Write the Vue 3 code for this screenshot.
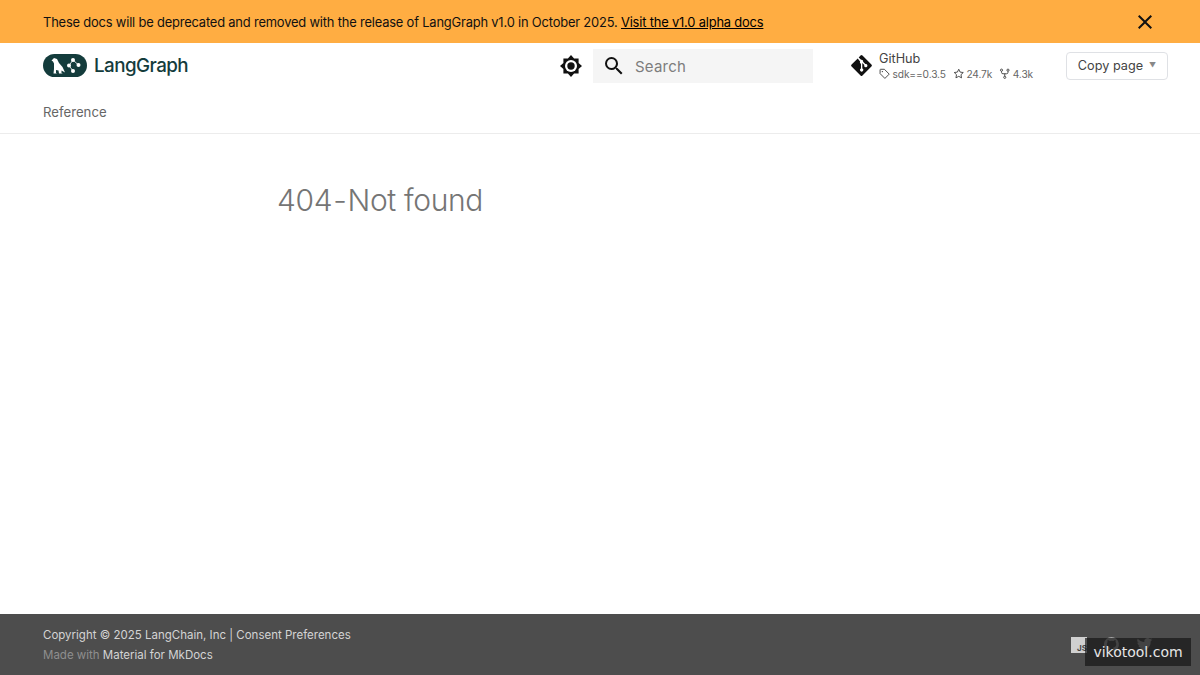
<template>
  <div class="page">
    <aside class="banner">
      <p class="banner-text">These docs will be deprecated and removed with the release of LangGraph v1.0 in October 2025. <a class="banner-link">Visit the v1.0 alpha docs</a></p>
      <svg class="close" viewBox="0 0 24 24"><path d="M19 6.41 17.59 5 12 10.59 6.41 5 5 6.41 10.59 12 5 17.59 6.41 19 12 13.41 17.59 19 19 17.59 13.41 12z"/></svg>
    </aside>
    <header class="header">
      <div class="brand">
        <svg class="logo" viewBox="0 0 44 23">
          <rect width="44" height="23" rx="11.500" fill="#143c3c"/>
          <path d="M8.500 6.500 11 4 14 5 16 9 19.500 13 22 18.500 18.500 16.500 18.500 19 20 19.500 16 19.500 15.500 16.500 13 16 13 19 14 19.500 10.500 19.500 11 15 11 9.500 10 7.500Z" fill="#fff"/>
          <g fill="#fff"><circle cx="30" cy="6" r="2"/><circle cx="30" cy="17" r="2"/><circle cx="35.500" cy="11" r="2"/><circle cx="26" cy="11.500" r="2"/></g>
          <path d="M26 11.500 30 6M26 11.500 30 17M30 6 35.500 11" stroke="#fff" stroke-width=".8"/>
        </svg>
        <span class="brand-name">LangGraph</span>
      </div>
      <div class="header-right">
        <svg class="theme" viewBox="0 0 24 24"><path d="m12 1 3.100 3.400h4.500v4.500L23 12l-3.400 3.100v4.500h-4.500L12 23l-3.100-3.400H4.400v-4.500L1 12l3.400-3.100V4.400h4.500Z" fill="#111"/><circle cx="12" cy="12" r="6" fill="#fff"/><circle cx="12" cy="12" r="3.700" fill="#111"/></svg>
        <div class="search">
          <svg class="search-icon" viewBox="0 0 24 24"><path d="M9.500 3A6.500 6.500 0 0 1 16 9.500c0 1.610-.59 3.090-1.560 4.230l.27.270h.79l5 5-1.500 1.500-5-5v-.79l-.27-.27A6.516 6.516 0 0 1 9.500 16 6.500 6.500 0 0 1 3 9.500 6.500 6.500 0 0 1 9.500 3m0 2C7 5 5 7 5 9.500S7 14 9.500 14 14 12 14 9.500 12 5 9.500 5"/></svg>
          <span class="search-label">Search</span>
        </div>
        <div class="repo">
          <svg class="git" viewBox="0 0 24 24"><path d="M23.300 10.900 13.100.7a1.500 1.500 0 0 0-2.200 0L8.800 2.800l2.700 2.700a1.800 1.800 0 0 1 2.300 2.300l2.600 2.600a1.800 1.800 0 1 1-1.100 1l-2.400-2.400v6.400a1.800 1.800 0 1 1-1.500 0V9.900a1.800 1.800 0 0 1-1-2.400L7.700 3.900.7 10.900a1.500 1.500 0 0 0 0 2.200l10.200 10.200a1.500 1.500 0 0 0 2.200 0l10.200-10.200a1.500 1.500 0 0 0 0-2.200"/></svg>
          <div class="repo-text">
            <div class="repo-name">GitHub</div>
            <div class="facts">
              <span class="fact"><svg class="fact-icon" viewBox="0 0 16 16"><path d="M1.500 2.500v5.300l6.700 6.700 6-6-6.700-6.700H2.200a.7.700 0 0 0-.7.700Z" fill="none" stroke="#444" stroke-width="1.300"/><circle cx="4.700" cy="5" r="1" fill="#444"/></svg>sdk==0.3.5</span>
              <span class="fact"><svg class="fact-icon" viewBox="0 0 16 16"><path d="m8 1.700 1.900 4 4.400.6-3.200 3 .8 4.400L8 11.600l-3.900 2.100.8-4.400-3.200-3 4.400-.6Z" fill="none" stroke="#444" stroke-width="1.300"/></svg>24.7k</span>
              <span class="fact"><svg class="fact-icon" viewBox="0 0 16 16"><g fill="none" stroke="#444" stroke-width="1.300"><circle cx="3.500" cy="3" r="1.500"/><circle cx="12.500" cy="3" r="1.500"/><circle cx="8" cy="13" r="1.500"/><path d="M3.500 4.500V6q0 2 2 2h5q2 0 2-2V4.500M8 8v3.500"/></g></svg>4.3k</span>
            </div>
          </div>
        </div>
        <button class="copy">Copy page <span class="caret">▼</span></button>
      </div>
    </header>
    <nav class="tabs"><a class="tab">Reference</a></nav>
    <main class="main">
      <h1 class="title"><span>404</span> <span>-</span> <span>Not found</span></h1>
    </main>
    <footer class="footer">
      <div class="footer-text">
        <div>Copyright © 2025 LangChain, Inc | Consent Preferences</div>
        <div class="made"><span class="dim">Made with</span> Material for MkDocs</div>
      </div>
      <div class="social">
        <span class="js">JS</span>
        <svg class="gh" viewBox="0 0 24 24"><path d="M12 1.500a10.500 10.500 0 0 0-3.300 20.500c.5.100.7-.2.700-.5v-2c-2.900.6-3.500-1.300-3.500-1.300-.5-1.200-1.200-1.500-1.200-1.500-1-.7.100-.7.100-.7 1 .1 1.600 1.100 1.600 1.100.9 1.600 2.500 1.100 3.100.9.100-.7.400-1.100.7-1.400-2.300-.3-4.800-1.200-4.800-5.200 0-1.100.4-2.100 1.100-2.800-.1-.3-.5-1.300.1-2.800 0 0 .9-.3 2.900 1.100a10 10 0 0 1 5.200 0c2-1.400 2.900-1.100 2.900-1.100.6 1.500.2 2.500.1 2.800.7.700 1.100 1.700 1.100 2.800 0 4-2.500 4.900-4.800 5.200.4.300.7.900.7 1.900v2.900c0 .3.200.6.700.5A10.500 10.500 0 0 0 12 1.500Z"/></svg>
        <svg class="tw" viewBox="0 0 24 24"><path d="M23 5.100c-.8.400-1.700.6-2.600.7.900-.6 1.600-1.400 2-2.500-.9.500-1.800.9-2.900 1.100a4.500 4.500 0 0 0-7.700 4.100C8 8.300 4.700 6.500 2.500 3.800a4.500 4.500 0 0 0 1.400 6c-.7 0-1.400-.2-2-.6 0 2.200 1.500 4 3.600 4.500-.7.200-1.400.2-2 .1.600 1.800 2.200 3.100 4.200 3.100A9.100 9.100 0 0 1 1 18.800a12.800 12.800 0 0 0 19.700-11.400c.9-.6 1.700-1.400 2.300-2.300Z"/></svg>
      </div>
    </footer>
    <div class="watermark">vikotool.com</div>
  </div>
</template>

<script setup>
</script>

<style>
html, body { margin: 0; padding: 0; background: #fff; }
</style>

<style scoped>
.page {
  position: relative;
  width: 1200px;
  height: 675px;
  display: flex;
  flex-direction: column;
  overflow: hidden;
  font-family: Inter, "Liberation Sans", sans-serif;
  background: #fff;
  color: #333;
}
.banner {
  height: 43px;
  flex: none;
  background: #ffad42;
  display: flex;
  align-items: center;
  justify-content: space-between;
  padding: 0 43px;
  color: #111;
}
.banner-text { margin: 0; padding-top: 1px; font-size: 12.9px; letter-spacing: -0.18px; }
.banner-link { color: #000; text-decoration: underline; }
.close { width: 24px; height: 24px; fill: #111; }
.header {
  height: 47px;
  flex: none;
  display: flex;
  align-items: center;
  justify-content: space-between;
  padding: 0 32px 0 43px;
  margin-top: -1px;
  margin-bottom: 1px;
}
.brand { display: flex; align-items: center; gap: 7px; }
.logo { width: 44px; height: 23px; display: block; }
.brand-name { font-size: 18.8px; font-weight: 500; letter-spacing: -0.55px; color: #143c3c; }
.header-right { display: flex; align-items: center; }
.theme { width: 24px; height: 24px; margin-right: 10px; }
.search {
  width: 220px;
  height: 34px;
  background: #f5f5f5;
  display: flex;
  align-items: center;
  padding-left: 9px;
  box-sizing: border-box;
}
.search-icon { width: 24px; height: 24px; fill: #111; }
.search-label { margin-left: 9px; padding-top: 1px; font-size: 15px; color: #7d7d7d; letter-spacing: 0.2px; }
.repo { display: flex; align-items: center; margin-left: 38px; width: 215px; }
.git { width: 21px; height: 21px; fill: #111; }
.repo-text { margin-left: 7px; }
.repo-name { font-size: 12.7px; color: #444; line-height: 15px; }
.facts { display: flex; gap: 7px; margin-top: 1px; font-size: 10.2px; color: #666; letter-spacing: -0.12px; line-height: 14px; }
.fact { display: flex; align-items: center; gap: 2px; }
.fact-icon { width: 11.5px; height: 11.5px; }
.copy {
  width: 102px;
  height: 28px;
  border: 1px solid #dfe1e5;
  border-radius: 4px;
  background: #fff;
  font-family: inherit;
  font-size: 12.7px;
  color: #444;
  padding: 0;
  display: flex;
  align-items: center;
  justify-content: center;
  gap: 6px;
}
.caret { font-size: 7px; color: #888; }
.tabs {
  height: 44px;
  flex: none;
  box-sizing: border-box;
  border-bottom: 1px solid #ececec;
  padding: 0 43px;
  display: flex;
  align-items: center;
}
.tab { font-size: 13.2px; color: #666; }
.main { flex: 1; padding: 0 277px; }
.title {
  margin: 46px 0 0;
  display: flex;
  gap: 1px;
  font-size: 30px;
  line-height: 40px;
  font-weight: 300;
  color: #757575;
  letter-spacing: -0.35px;
}
.footer {
  height: 61px;
  flex: none;
  background: #4d4d4d;
  display: flex;
  justify-content: space-between;
  align-items: center;
  padding: 0 43px;
  color: #d4d4d4;
  font-size: 11.5px;
}
.footer-text { line-height: 20px; }
.dim { color: #8f8f8f; }
.social { display: flex; align-items: center; gap: 16px; margin-top: 1px; margin-right: 4px; }
.js {
  width: 16px;
  height: 16px;
  background: #d0d0d0;
  color: #444;
  font-size: 8px;
  font-weight: 700;
  display: flex;
  align-items: flex-end;
  justify-content: flex-end;
}
.gh, .tw { width: 17px; height: 17px; margin-top: -2px; fill: #a5a5a5; }
.watermark {
  position: absolute;
  left: 1085px;
  top: 638px;
  width: 106px;
  height: 28px;
  background: rgba(20, 20, 20, 0.68);
  color: #e6e6e6;
  font-family: "DejaVu Sans", sans-serif;
  font-size: 14px;
  display: flex;
  align-items: center;
  justify-content: center;
}
</style>
